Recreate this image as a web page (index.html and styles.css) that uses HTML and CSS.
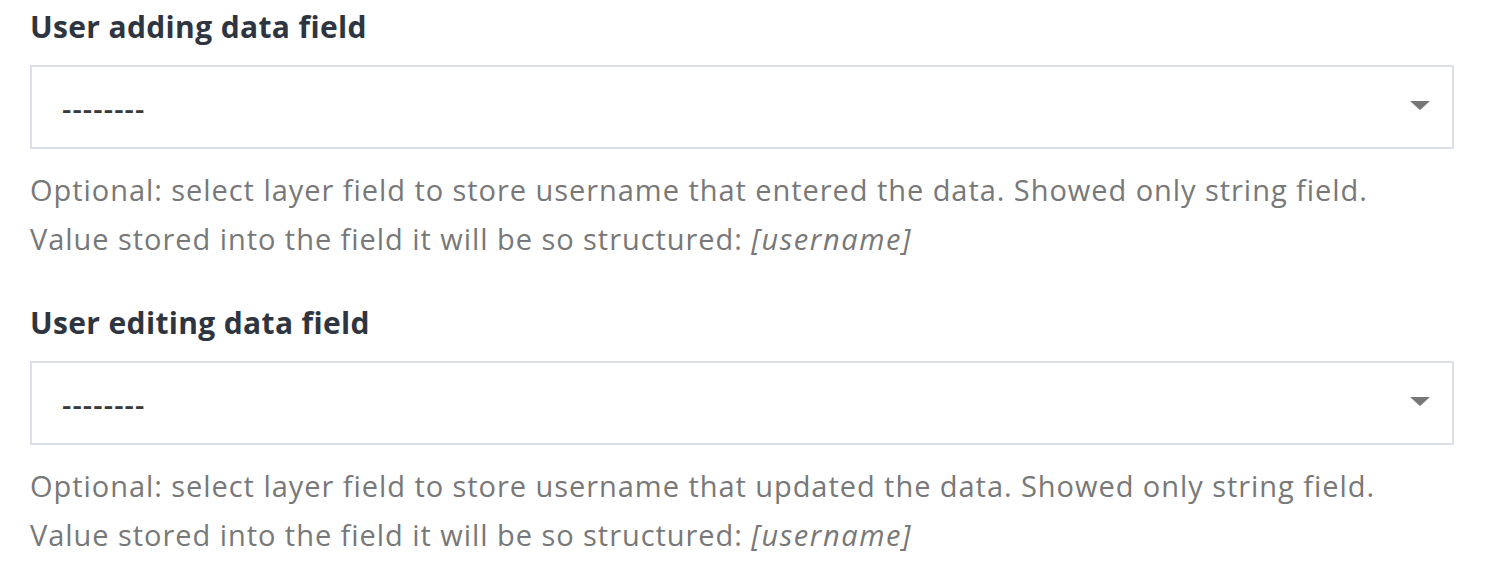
FILE: index.html
```html
<!DOCTYPE html>
<html lang="en">
<head>
<meta charset="utf-8">
<title>User fields</title>
<link rel="stylesheet" href="styles.css">
</head>
<body>
<main class="form">
  <div class="field">
    <label class="field-label">User adding data field</label>
    <div class="select">
      <span class="select-value">--------</span>
      <span class="select-arrow"></span>
    </div>
    <p class="help">Optional: select layer field to store username that entered the data. Showed only string field.<br>Value stored into the field it will be so structured: <em>[username]</em></p>
  </div>
  <div class="field">
    <label class="field-label">User editing data field</label>
    <div class="select">
      <span class="select-value">--------</span>
      <span class="select-arrow"></span>
    </div>
    <p class="help">Optional: select layer field to store username that updated the data. Showed only string field.<br>Value stored into the field it will be so structured: <em>[username]</em></p>
  </div>
</main>
</body>
</html>
```
FILE: styles.css
```css
html, body {
  margin: 0;
  padding: 0;
  background: #ffffff;
}
body {
  font-family: "Open Sans", "Noto Sans", sans-serif;
}
.form {
  display: flex;
  flex-direction: column;
  gap: 40px;
  padding: 7px 46px 0 30px;
}
.field {
  display: flex;
  flex-direction: column;
}
.field-label {
  font-size: 30px;
  font-weight: 700;
  line-height: 40px;
  color: #2f3540;
  letter-spacing: 0.35px;
}
.select {
  margin-top: 18px;
  height: 84px;
  box-sizing: border-box;
  border: 2px solid #dcdfe7;
  display: flex;
  align-items: center;
  justify-content: space-between;
  padding: 0 22px 0 30px;
}
.select-value {
  font-size: 29px;
  font-weight: 600;
  color: #3a3a3a;
  letter-spacing: 1.1px;
}
.select-arrow {
  width: 0;
  height: 0;
  border-left: 10px solid transparent;
  border-right: 10px solid transparent;
  border-top: 9px solid #777;
  margin-top: -4px;
}
.help {
  margin: 16px 0 0;
  font-size: 29px;
  line-height: 49px;
  color: #787878;
  letter-spacing: 0.95px;
}
.help em {
  font-style: italic;
  letter-spacing: 1.6px;
}
```
